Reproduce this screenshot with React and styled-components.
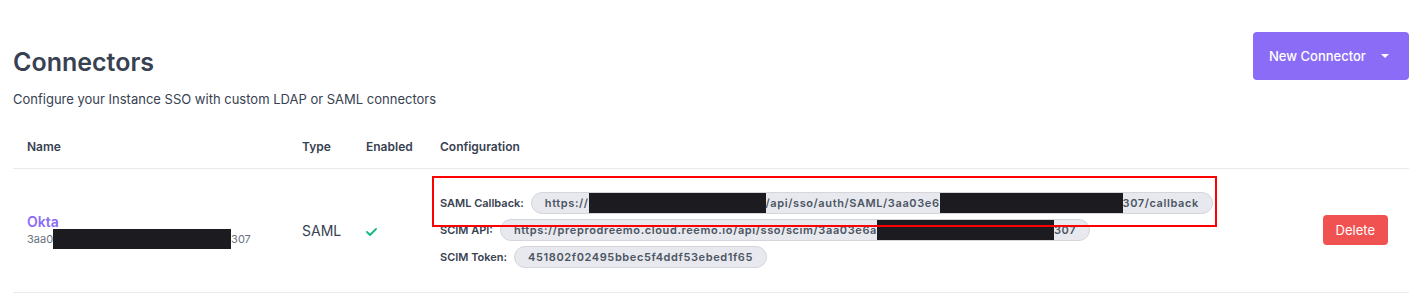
import React from "react";
import styled, { createGlobalStyle } from "styled-components";

const Global = createGlobalStyle`
  html, body { margin: 0; padding: 0; background: #fff; }
  body { font-family: Inter, "Noto Sans", sans-serif; color: #374151; }
`;

const Page = styled.div`
  padding: 32px 16px 0 13px;
`;

const Header = styled.header`
  display: flex;
  justify-content: space-between;
  align-items: flex-start;
`;

const TitleBlock = styled.div`
  padding-top: 14px;
`;

const Title = styled.h1`
  margin: 0;
  font-size: 25px;
  line-height: 32px;
  font-weight: 600;
  color: #374151;
`;

const Subtitle = styled.p`
  margin: 12px 0 0;
  font-size: 13px;
  line-height: 18px;
  color: #374151;
`;

const PrimaryButton = styled.button`
  display: flex;
  align-items: center;
  gap: 15px;
  height: 48px;
  width: 156px;
  padding: 0 16px;
  border: none;
  border-radius: 4px;
  background: #8b6cf6;
  color: #fff;
  font-family: inherit;
  font-size: 13px;
  font-weight: 500;
  white-space: nowrap;
  cursor: pointer;
`;

const Caret = styled.span`
  width: 0;
  height: 0;
  border-left: 4px solid transparent;
  border-right: 4px solid transparent;
  border-top: 4px solid #fff;
`;

const Table = styled.div`
  margin-top: 19px;
`;

const Row = styled.div`
  display: grid;
  grid-template-columns: 275px 64px 74px 1fr auto;
  align-items: center;
  padding: ${(p) => (p.$head ? "12px 21px 13px 14px" : "23px 21px 24px 14px")};
  border-bottom: 1px solid #e9eaee;
`;

const HeadCell = styled.div`
  font-size: 12px;
  line-height: 16px;
  font-weight: 600;
  color: #374151;
`;

const NameCell = styled.div`
  display: flex;
  flex-direction: column;
`;

const NameLink = styled.a`
  font-size: 14px;
  line-height: 20px;
  font-weight: 600;
  color: #8b6cf6;
  text-decoration: none;
`;

const IdLine = styled.div`
  display: flex;
  align-items: center;
  margin-top: -3px;
  font-size: 11px;
  line-height: 20px;
  color: #6b7280;
`;

const Redact = styled.span`
  display: inline-block;
  width: ${(p) => p.$w}px;
  height: 20px;
  background: #1c1b20;
  flex: none;
`;

const TypeCell = styled.div`
  font-size: 14px;
  color: #374151;
`;

const Config = styled.div`
  position: relative;
  display: flex;
  flex-direction: column;
  align-items: flex-start;
  gap: 5px;
`;

const ConfigLine = styled.div`
  display: flex;
  align-items: center;
  gap: 7px;
`;

const Label = styled.span`
  font-size: 11px;
  font-weight: 600;
  color: #374151;
`;

const Pill = styled.span`
  display: inline-flex;
  align-items: center;
  height: 22px;
  box-sizing: border-box;
  padding: 0 13px;
  border: 1px solid #d4d6dc;
  border-radius: 999px;
  background: #e8e9ee;
  font-size: 11px;
  font-weight: 600;
  letter-spacing: 0.055em;
  color: #4b5563;
  white-space: nowrap;
`;

const Highlight = styled.div`
  position: absolute;
  left: -8px;
  top: -16px;
  width: 785px;
  height: 51px;
  box-sizing: border-box;
  border: 2px solid #ff0000;
  pointer-events: none;
`;

const DangerButton = styled.button`
  height: 30px;
  padding: 0 13px;
  border: none;
  border-radius: 4px;
  background: #f05252;
  color: #fff;
  font-family: inherit;
  font-size: 13px;
  cursor: pointer;
`;

const Check = () => (
  <svg width="11" height="8" viewBox="0 0 11 8" fill="none">
    <path d="M1 4l3 3 6-6" stroke="#10b981" strokeWidth="1.8" strokeLinecap="round" strokeLinejoin="round" />
  </svg>
);

export default function App() {
  return (
    <Page>
      <Global />
      <Header>
        <TitleBlock>
          <Title>Connectors</Title>
          <Subtitle>Configure your Instance SSO with custom LDAP or SAML connectors</Subtitle>
        </TitleBlock>
        <PrimaryButton>
          New Connector
          <Caret />
        </PrimaryButton>
      </Header>
      <Table>
        <Row $head>
          <HeadCell>Name</HeadCell>
          <HeadCell>Type</HeadCell>
          <HeadCell>Enabled</HeadCell>
          <HeadCell>Configuration</HeadCell>
          <HeadCell />
        </Row>
        <Row>
          <NameCell>
            <NameLink href="#">Okta</NameLink>
            <IdLine>
              3aa0
              <Redact $w={178} />
              307
            </IdLine>
          </NameCell>
          <TypeCell>SAML</TypeCell>
          <div>
            <Check />
          </div>
          <Config>
            <ConfigLine>
              <Label>SAML Callback:</Label>
              <Pill>
                https://
                <Redact $w={177} />
                /api/sso/auth/SAML/3aa03e6
                <Redact $w={183} />
                307/callback
              </Pill>
            </ConfigLine>
            <ConfigLine>
              <Label>SCIM API:</Label>
              <Pill>
                https://preprodreemo.cloud.reemo.io/api/sso/scim/3aa03e6a
                <Redact $w={177} />
                307
              </Pill>
            </ConfigLine>
            <ConfigLine>
              <Label>SCIM Token:</Label>
              <Pill>451802f02495bbec5f4ddf53ebed1f65</Pill>
            </ConfigLine>
            <Highlight />
          </Config>
          <DangerButton>Delete</DangerButton>
        </Row>
      </Table>
    </Page>
  );
}
